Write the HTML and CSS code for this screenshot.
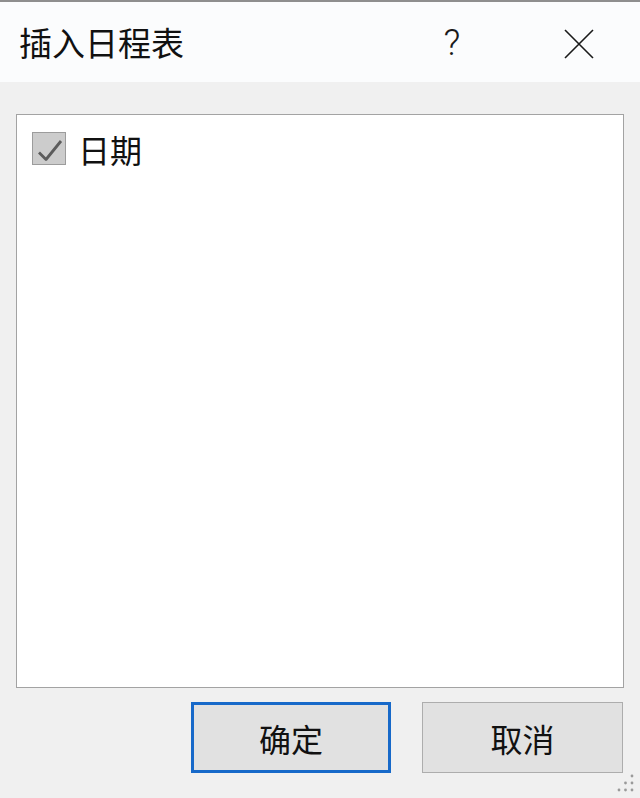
FILE: index.html
```html
<!DOCTYPE html>
<html lang="zh-CN">
<head>
  <meta charset="UTF-8">
  <meta name="viewport" content="width=device-width, initial-scale=1.0">
  <title>插入日程表</title>
  <link rel="stylesheet" href="styles.css">
</head>
<body>

  <div class="ventana">
    <div class="barra-titulo">
      <span class="titulo">插入日程表</span>
      <span class="boton-ayuda">?</span>
      <span class="boton-cerrar">
        <svg width="30" height="30" viewBox="0 0 30 30">
          <path d="M1 1 L29 29 M29 1 L1 29" stroke="#1a1a1a" stroke-width="1.6" fill="none"/>
        </svg>
      </span>
    </div>

    <div class="contenido">
      <div class="lista">
        <label class="opcion">
          <span class="casilla">
            <svg width="34" height="33" viewBox="0 0 34 33">
              <path d="M7 20.5 L14 27.5 L29 9" stroke="#5c5c5c" stroke-width="2.8" fill="none" stroke-linejoin="round"/>
            </svg>
          </span>
          <span class="texto-opcion">日期</span>
        </label>
      </div>

      <div class="botones">
        <div class="boton boton-principal">确定</div>
        <div class="boton">取消</div>
      </div>
    </div>

    <!-- agarre para redimensionar -->
    <svg class="agarre" width="20" height="20" viewBox="0 0 20 20">
      <circle cx="15" cy="2" r="1.4" fill="#9a9a9a"/>
      <circle cx="8.5" cy="9" r="1.4" fill="#9a9a9a"/>
      <circle cx="15" cy="9" r="1.4" fill="#9a9a9a"/>
      <circle cx="2" cy="16" r="1.4" fill="#9a9a9a"/>
      <circle cx="8.5" cy="16" r="1.4" fill="#9a9a9a"/>
      <circle cx="15" cy="16" r="1.4" fill="#9a9a9a"/>
    </svg>
  </div>

</body>
</html>
```

FILE: styles.css
```css
body {
  margin: 0;
  background-color: #f0f0f0;
  font-family: 'Noto Sans CJK SC', 'Noto Sans', sans-serif;
  color: #111;
}

.ventana {
  position: relative;
  height: 798px;
  border-top: 2px solid #8e8e8e;
  box-sizing: border-box;
  overflow: hidden;
}

.barra-titulo {
  height: 80px;
  background-color: #fbfcfd;
  display: flex;
  align-items: center;
  padding-left: 19px;
}

.titulo {
  font-size: 33px;
  line-height: 1;
  flex: 1;
}

.boton-ayuda {
  width: 60px;
  text-align: center;
  font-family: Roboto, 'Liberation Sans', sans-serif;
  font-weight: 300;
  font-size: 37px;
  line-height: 1;
  color: #1a1a1a;
  margin-top: 0;
}

.boton-cerrar {
  width: 30px;
  height: 30px;
  margin-left: 82px;
  margin-right: 46px;
  margin-top: 4px;
}

.contenido {
  padding: 32px 16px 0 16px;
}

.lista {
  height: 574px;
  background-color: #ffffff;
  border: 1px solid #a3a3a3;
  padding: 16px 15px;
  box-sizing: border-box;
}

.opcion {
  display: flex;
  align-items: center;
  gap: 12px;
}

.casilla {
  width: 34px;
  height: 33px;
  background-color: #cccccc;
  border: 1px solid #9c9c9c;
  box-sizing: border-box;
  display: flex;
}

.casilla svg {
  margin: -1px;
}

.texto-opcion {
  font-size: 32px;
  line-height: 1;
  margin-top: 2px;
}

.botones {
  margin-top: 14px;
  display: flex;
  justify-content: flex-end;
  gap: 31px;
  padding-right: 1px;
}

.boton {
  width: 201px;
  height: 71px;
  background-color: #e1e1e1;
  border: 1px solid #adadad;
  box-sizing: border-box;
  display: flex;
  align-items: center;
  justify-content: center;
  font-size: 32px;
  line-height: 1;
}

.boton-principal {
  width: 200px;
  border: 3px solid #1769c9;
}

.agarre {
  position: absolute;
  right: 3px;
  bottom: 4px;
}
```
